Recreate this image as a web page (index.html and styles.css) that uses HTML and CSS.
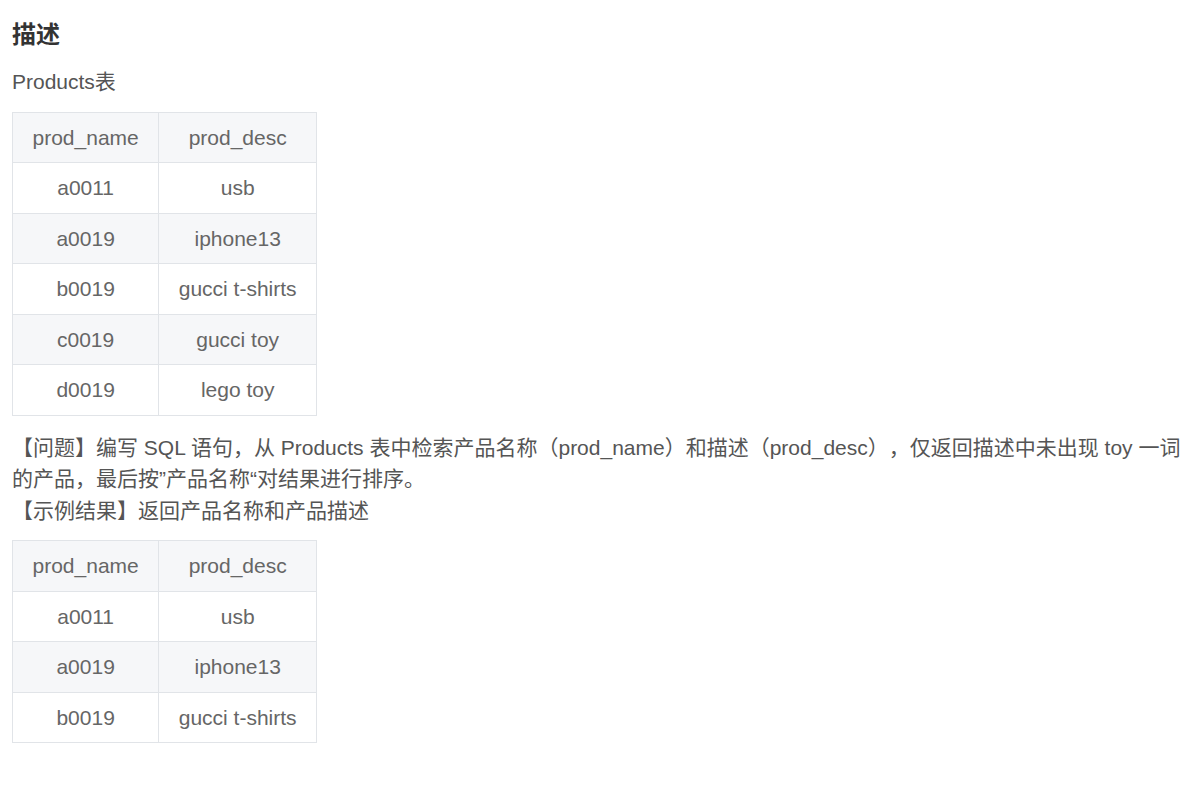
FILE: index.html
```html
<!DOCTYPE html>
<html lang="zh-CN">
<head>
    <meta charset="UTF-8">
    <title>描述</title>
    <link rel="stylesheet" href="styles.css">
</head>
<body>
    <div class="question">
        <h3>描述</h3>
        <p>Products表</p>
        <table>
            <tr><th>prod_name</th><th>prod_desc</th></tr>
            <tr><td>a0011</td><td>usb</td></tr>
            <tr><td>a0019</td><td>iphone13</td></tr>
            <tr><td>b0019</td><td>gucci t-shirts</td></tr>
            <tr><td>c0019</td><td>gucci toy</td></tr>
            <tr><td>d0019</td><td>lego toy</td></tr>
        </table>
        <p>【问题】编写 SQL 语句，从 Products 表中检索产品名称（prod_name）和描述（prod_desc），仅返回描述中未出现 toy 一词的产品，最后按”产品名称“对结果进行排序。<br>【示例结果】返回产品名称和产品描述</p>
        <table>
            <tr><th>prod_name</th><th>prod_desc</th></tr>
            <tr><td>a0011</td><td>usb</td></tr>
            <tr><td>a0019</td><td>iphone13</td></tr>
            <tr><td>b0019</td><td>gucci t-shirts</td></tr>
        </table>
    </div>
</body>
</html>
```

FILE: styles.css
```css
body {
    margin: 0;
    padding: 0 12px;
    background-color: #fff;
    font-family: "Liberation Sans", Arial, "Noto Sans CJK SC", sans-serif;
    font-size: 21px;
    line-height: 1.5;
    color: #555;
    text-spacing-trim: space-all;
}
h3 {
    font-size: 24px;
    line-height: 36px;
    color: #333;
    margin: 17px 0 13px;
}
p {
    margin: 0 0 14px;
}
table {
    border-collapse: collapse;
    margin: 0 0 16px;
    color: #666;
}
th, td {
    border: 1px solid #e1e4e8;
    padding: 12px 19.5px;
    line-height: 25.5px;
    font-weight: normal;
    text-align: center;
}
tr:nth-child(odd) {
    background-color: #f6f7f9;
}
tr:nth-child(even) {
    background-color: #fff;
}
```
